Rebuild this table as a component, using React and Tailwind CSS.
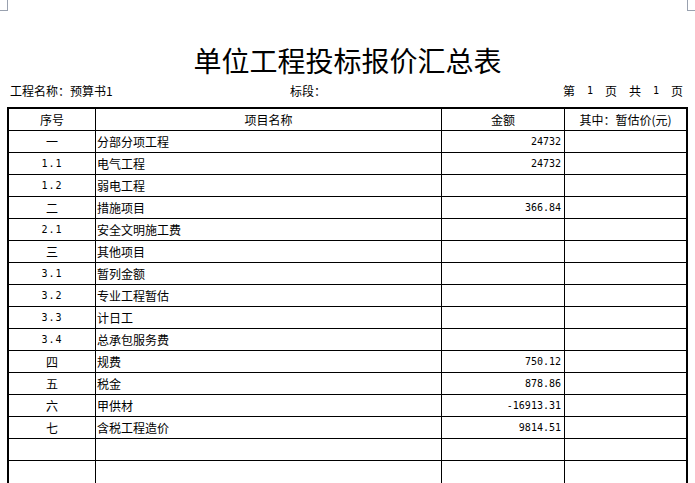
import React from "react";

const rows = [
  ["一", "分部分项工程", "24732"],
  ["1.1", "电气工程", "24732"],
  ["1.2", "弱电工程", ""],
  ["二", "措施项目", "366.84"],
  ["2.1", "安全文明施工费", ""],
  ["三", "其他项目", ""],
  ["3.1", "暂列金额", ""],
  ["3.2", "专业工程暂估", ""],
  ["3.3", "计日工", ""],
  ["3.4", "总承包服务费", ""],
  ["四", "规费", "750.12"],
  ["五", "税金", "878.86"],
  ["六", "甲供材", "-16913.31"],
  ["七", "含税工程造价", "9814.51"],
  ["", "", ""],
  ["", "", ""],
];

const cjk = "font-['Noto_Sans_CJK_SC',sans-serif]";
const mono = "font-['DejaVu_Sans_Mono','Noto_Sans_CJK_SC',monospace]";

const Seq = ({ v }) => {
  // arabic numbering uses the half-width mono face, chinese numerals the cjk face
  const isNum = /^[0-9.]+$/.test(v);
  return <span className={isNum ? `${mono} text-[10px] tracking-[1px]` : `${cjk} text-[12px]`}>{v}</span>;
};

const App = () => {
  return (
    <div className={`relative w-[695px] h-[483px] overflow-hidden bg-white text-black ${cjk}`}>
      {/* page corner marks */}
      <div className="absolute left-0 top-0 w-[8px] h-[11px] border-r border-b border-gray-400" />
      <div className="absolute right-0 top-0 w-[8px] h-[11px] border-l border-b border-gray-400" />

      <h1 className={`mt-[46px] text-center text-[28px] leading-[28px] font-normal ${cjk}`}>单位工程投标报价汇总表</h1>

      <div className="mt-[10px] flex items-center h-[14px] text-[12px] leading-[14px]">
        <span className="ml-[10px] w-[280px]">工程名称：预算书1</span>
        <span>标段：</span>
        <div className="ml-auto mr-[12px] flex gap-[12px]">
          <span>第</span>
          <span className={`${mono} text-[10px]`}>1</span>
          <span>页</span>
          <span>共</span>
          <span className={`${mono} text-[10px]`}>1</span>
          <span>页</span>
        </div>
      </div>

      <div className="mt-[9px] ml-[7px] w-[681px] border-2 border-black">
        <div className="grid grid-cols-[87px_346px_123px_121px] h-[22px] border-b border-black text-[12px]">
          <div className="flex items-center justify-center border-r border-black">序号</div>
          <div className="flex items-center justify-center border-r border-black">项目名称</div>
          <div className="flex items-center justify-center border-r border-black">金额</div>
          <div className="flex items-center justify-center">其中：暂估价(元)</div>
        </div>
        {rows.map((r, i) => (
          <div
            key={i}
            className={`grid grid-cols-[87px_346px_123px_121px] h-[22px] ${i < rows.length - 1 ? "border-b" : ""} border-black text-[12px]`}
          >
            <div className="flex items-center justify-center border-r border-black">
              <Seq v={r[0]} />
            </div>
            <div className="flex items-center pl-[1px] border-r border-black">{r[1]}</div>
            <div className={`flex items-center justify-end pr-[3px] border-r border-black ${mono} text-[10px]`}>{r[2]}</div>
            <div />
          </div>
        ))}
      </div>
    </div>
  );
};

export default App;
